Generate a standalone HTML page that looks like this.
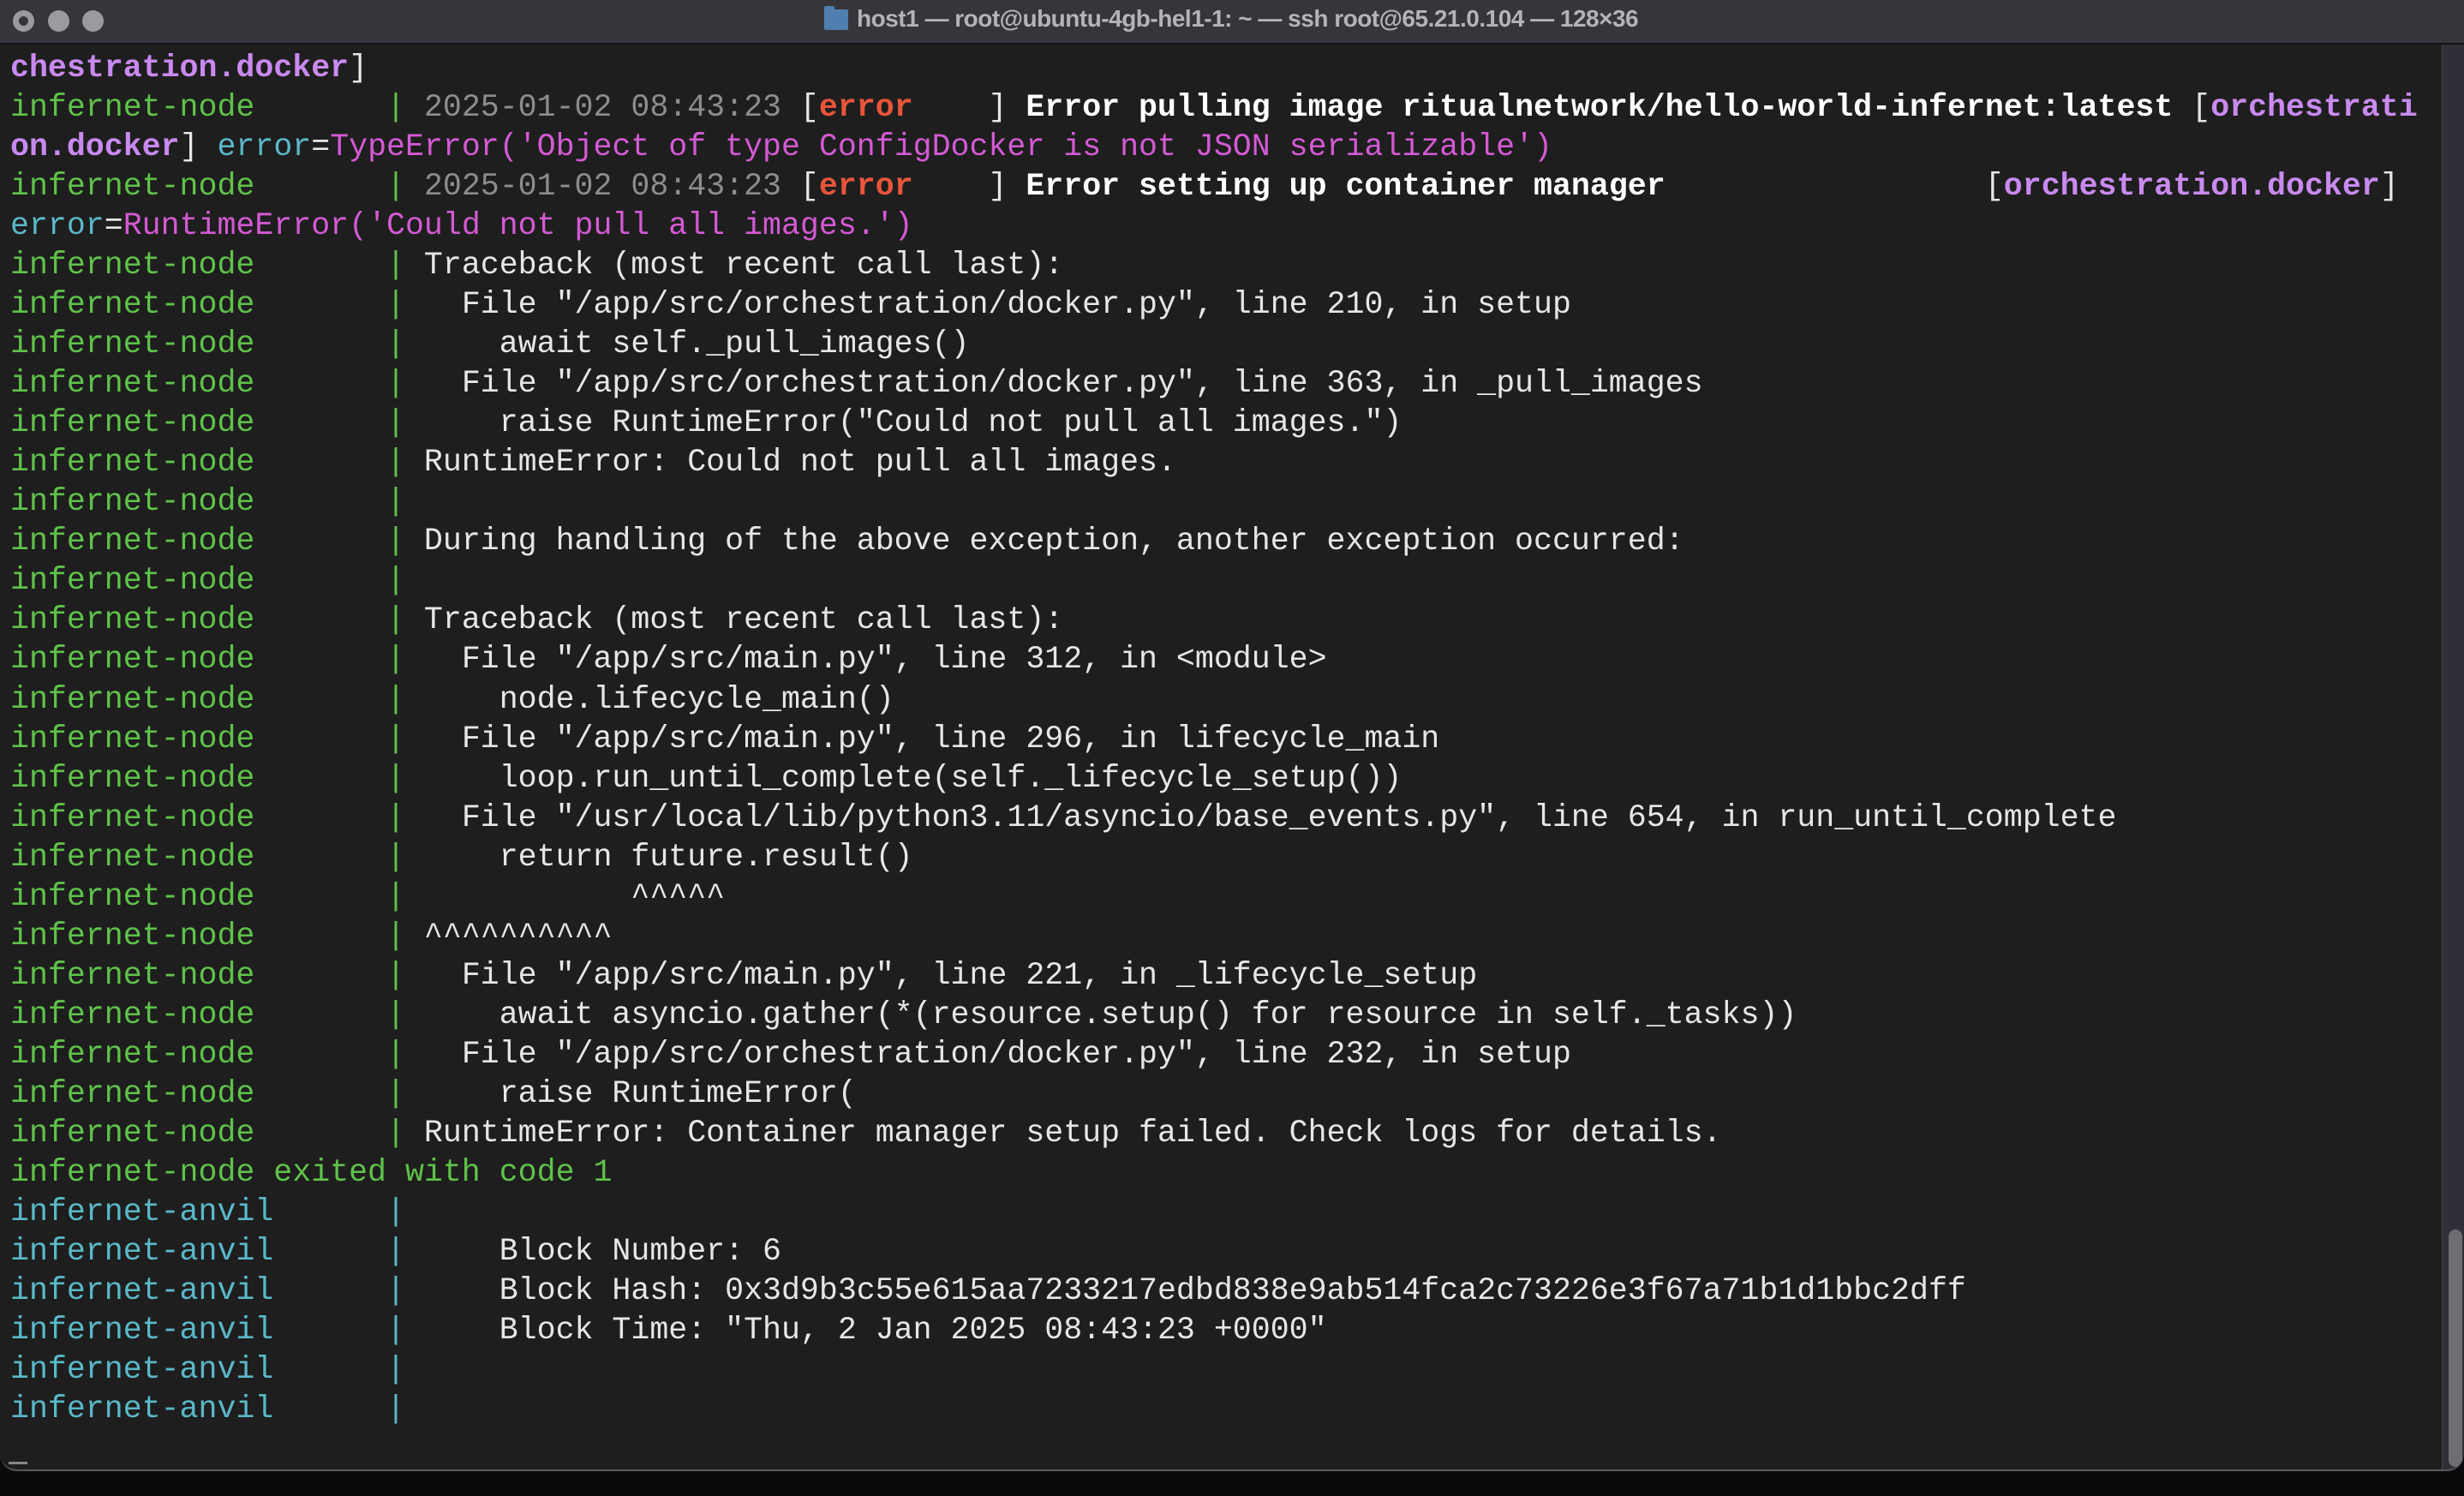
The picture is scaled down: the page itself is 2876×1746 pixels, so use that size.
<!DOCTYPE html>
<html><head><meta charset="utf-8"><style>
html,body{margin:0;padding:0;background:#0a0a0d;width:2876px;height:1746px;overflow:hidden}
.win{position:absolute;left:0;top:0;width:2876px;height:1717px;background:#1e1e1e;border-radius:0 0 20px 20px;overflow:hidden;border-bottom:2px solid #5a5a5e;box-sizing:border-box}
.tb{position:absolute;left:0;top:0;width:2876px;height:52px;background:#36353b;border-bottom:2px solid #141414;box-sizing:border-box}
.dot{position:absolute;top:12px;width:25px;height:25px;border-radius:50%;background:#9b9aa0}
.title{position:absolute;left:1000px;top:6px;font:bold 28px "Liberation Sans",sans-serif;color:#b4b3b8;white-space:pre;transform-origin:0 0;transform:scaleX(1.0);letter-spacing:-0.5px}
.folder{position:absolute;left:962px;top:11px;width:28px;height:24px;background:#4f7fb0;border-radius:2px}
.folder:before{content:"";position:absolute;left:0;top:-4px;width:12px;height:6px;background:#4f7fb0;border-radius:2px 2px 0 0}
.track{position:absolute;left:2850px;top:52px;width:26px;height:1665px;background:#302e36;border-left:1px solid #46454b}
.thumb{position:absolute;left:2858px;top:1435px;width:16px;height:277px;border-radius:8px;background:#6e6d74}
pre{position:absolute;left:12px;top:57px;margin:0;font:36.6px/46.03px "Liberation Mono",monospace;color:#e6e6e6;white-space:pre}
.g{color:#5fc24a}.d{color:#8d8d8d}.r{color:#e8553a;font-weight:bold}.p{color:#c98af0;font-weight:bold}
.c{color:#5ab8c8}.m{color:#d45ad4}.w{color:#fff;font-weight:bold}
.cur{position:absolute;left:10px;top:1706px;width:22px;height:3px;background:#888}
</style></head><body>
<div class="win">
<div class="tb">
<div class="dot" style="left:15px"></div><div class="dot" style="left:56px"></div><div class="dot" style="left:96px"></div>
<div class="dot" style="left:22px;top:19px;width:11px;height:11px;background:#36353b"></div>
<div class="folder"></div>
<div class="title">host1 — root@ubuntu-4gb-hel1-1: ~ — ssh root@65.21.0.104 — 128×36</div>
</div>
<div class="track"></div><div class="thumb"></div>
<pre><span class="p">chestration.docker</span>]
<span class="g">infernet-node       |</span> <span class="d">2025-01-02 08:43:23</span> [<span class="r">error    </span>] <span class="w">Error pulling image ritualnetwork/hello-world-infernet:latest</span> [<span class="p">orchestrati</span>
<span class="p">on.docker</span>] <span class="c">error</span>=<span class="m">TypeError('Object of type ConfigDocker is not JSON serializable')</span>
<span class="g">infernet-node       |</span> <span class="d">2025-01-02 08:43:23</span> [<span class="r">error    </span>] <span class="w">Error setting up container manager</span>                 [<span class="p">orchestration.docker</span>]
<span class="c">error</span>=<span class="m">RuntimeError('Could not pull all images.')</span>
<span class="g">infernet-node       |</span> Traceback (most recent call last):
<span class="g">infernet-node       |</span>   File "/app/src/orchestration/docker.py", line 210, in setup
<span class="g">infernet-node       |</span>     await self._pull_images()
<span class="g">infernet-node       |</span>   File "/app/src/orchestration/docker.py", line 363, in _pull_images
<span class="g">infernet-node       |</span>     raise RuntimeError("Could not pull all images.")
<span class="g">infernet-node       |</span> RuntimeError: Could not pull all images.
<span class="g">infernet-node       |</span>
<span class="g">infernet-node       |</span> During handling of the above exception, another exception occurred:
<span class="g">infernet-node       |</span>
<span class="g">infernet-node       |</span> Traceback (most recent call last):
<span class="g">infernet-node       |</span>   File "/app/src/main.py", line 312, in &lt;module&gt;
<span class="g">infernet-node       |</span>     node.lifecycle_main()
<span class="g">infernet-node       |</span>   File "/app/src/main.py", line 296, in lifecycle_main
<span class="g">infernet-node       |</span>     loop.run_until_complete(self._lifecycle_setup())
<span class="g">infernet-node       |</span>   File "/usr/local/lib/python3.11/asyncio/base_events.py", line 654, in run_until_complete
<span class="g">infernet-node       |</span>     return future.result()
<span class="g">infernet-node       |</span>            ^^^^^
<span class="g">infernet-node       |</span> ^^^^^^^^^^
<span class="g">infernet-node       |</span>   File "/app/src/main.py", line 221, in _lifecycle_setup
<span class="g">infernet-node       |</span>     await asyncio.gather(*(resource.setup() for resource in self._tasks))
<span class="g">infernet-node       |</span>   File "/app/src/orchestration/docker.py", line 232, in setup
<span class="g">infernet-node       |</span>     raise RuntimeError(
<span class="g">infernet-node       |</span> RuntimeError: Container manager setup failed. Check logs for details.
<span class="g">infernet-node exited with code 1</span>
<span class="c">infernet-anvil      |</span>
<span class="c">infernet-anvil      |</span>     Block Number: 6
<span class="c">infernet-anvil      |</span>     Block Hash: 0x3d9b3c55e615aa7233217edbd838e9ab514fca2c73226e3f67a71b1d1bbc2dff
<span class="c">infernet-anvil      |</span>     Block Time: "Thu, 2 Jan 2025 08:43:23 +0000"
<span class="c">infernet-anvil      |</span>
<span class="c">infernet-anvil      |</span></pre>
<div class="cur"></div>
</div>
</body></html>
